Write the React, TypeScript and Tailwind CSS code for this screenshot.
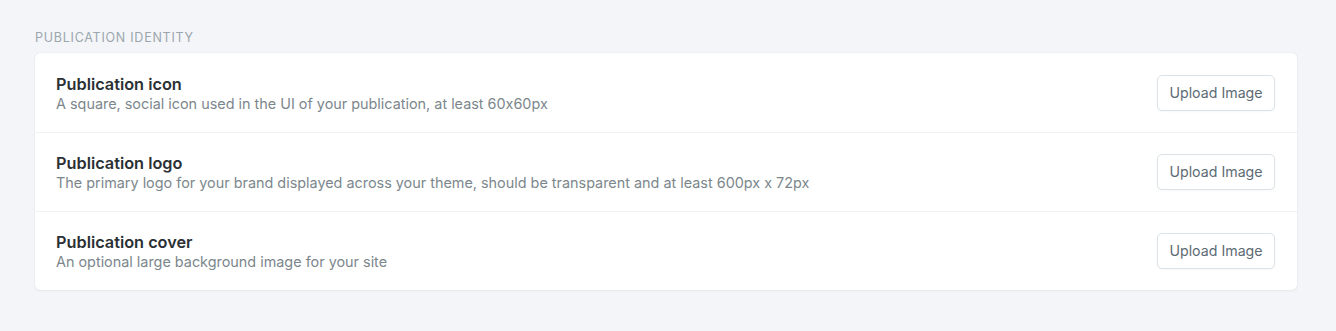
import React from 'react';

const rows = [
  {
    title: 'Publication icon',
    desc: 'A square, social icon used in the UI of your publication, at least 60x60px',
  },
  {
    title: 'Publication logo',
    desc: 'The primary logo for your brand displayed across your theme, should be transparent and at least 600px x 72px',
  },
  {
    title: 'Publication cover',
    desc: 'An optional large background image for your site',
  },
];

export default function App() {
  return (
    <div
      className="min-h-[331px] w-full bg-[#f4f5f8] pl-[35px] pr-[39px] pt-[30px] pb-[39px] [font-feature-settings:'calt'_0]"
      style={{ fontFamily: 'Inter, "Noto Sans", sans-serif' }}
    >
      <h4 className="text-[12.5px] leading-[16px] uppercase tracking-[0.06em] text-[#9ba6ae] mb-[7px]">
        Publication Identity
      </h4>
      <div className="bg-white rounded-[5px] shadow-[0_0_1px_rgba(0,0,0,0.14),0_1px_3px_rgba(0,0,0,0.05)]">
        {rows.map((r, i) => (
          <div
            key={r.title}
            className={`flex items-center justify-between h-[79px] pl-[21px] pr-[22px] ${i > 0 ? 'border-t border-[#edf1f4]' : ''}`}
          >
            <div className="flex flex-col pt-[2px]">
              <span className="text-[16.3px] leading-[20px] font-semibold text-[#2a3034]">{r.title}</span>
              <span className="text-[14.4px] leading-[20px] text-[#7c878c]">{r.desc}</span>
            </div>
            <button className="h-[36px] w-[118px] rounded-[5px] border border-[#dae2e8] bg-white text-[14.2px] text-[#5d6b73] shadow-[0_1px_2px_rgba(0,0,0,0.03)]">
              Upload Image
            </button>
          </div>
        ))}
      </div>
    </div>
  );
}
